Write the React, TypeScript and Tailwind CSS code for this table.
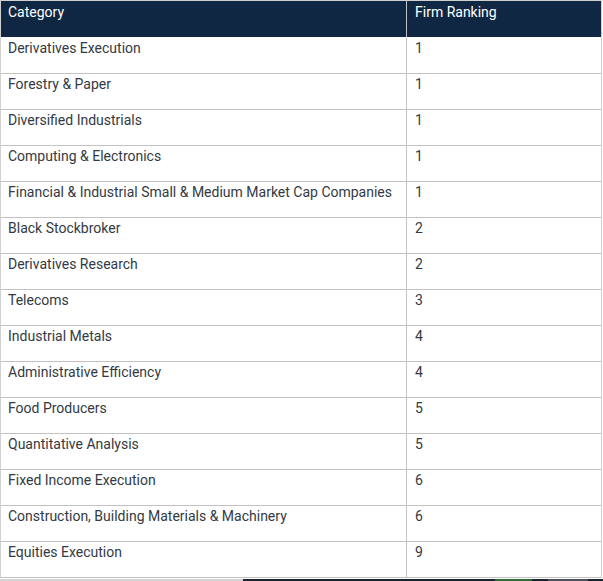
import React from "react";

const rows: [string, string][] = [
  ["Derivatives Execution", "1"],
  ["Forestry & Paper", "1"],
  ["Diversified Industrials", "1"],
  ["Computing & Electronics", "1"],
  ["Financial & Industrial Small & Medium Market Cap Companies", "1"],
  ["Black Stockbroker", "2"],
  ["Derivatives Research", "2"],
  ["Telecoms", "3"],
  ["Industrial Metals", "4"],
  ["Administrative Efficiency", "4"],
  ["Food Producers", "5"],
  ["Quantitative Analysis", "5"],
  ["Fixed Income Execution", "6"],
  ["Construction, Building Materials & Machinery", "6"],
  ["Equities Execution", "9"],
];

const App = () => {
  return (
    <div className="w-[603px] h-[581px] overflow-hidden bg-white font-['Roboto','Liberation_Sans',sans-serif] text-[14px] leading-[16px]">
      <div className="w-[602px] border-x border-t border-[#d0d0d0]">
        <div className="flex h-[37px] border-b border-white bg-[#0f2742] text-white">
          <div className="w-[405px] pl-[7px] pt-[3px]">Category</div>
          <div className="flex-1 border-l border-[#c2c2c2] pl-[8px] pt-[3px]">Firm Ranking</div>
        </div>
        {rows.map(([name, rank]) => (
          <div key={name} className="flex h-[36px] border-b border-[#c2c2c2] text-[#333a44]">
            <div className="w-[405px] pl-[7px] pt-[2px]">{name}</div>
            <div className="flex-1 border-l border-[#c2c2c2] pl-[8px] pt-[2px]">{rank}</div>
          </div>
        ))}
      </div>
      <div className="flex h-[3px] flex-col justify-end">
        <div className="flex h-[2px]">
          <div className="w-[243px] bg-[#d4d4d4]" />
          <div className="w-[252px] bg-[#1a2430]" />
          <div className="w-[37px] bg-[#2f6b38]" />
          <div className="w-[16px] bg-[#1a2430]" />
          <div className="w-[40px] bg-[#4b525a]" />
          <div className="flex-1 bg-[#1a2430]" />
        </div>
      </div>
    </div>
  );
};

export default App;
